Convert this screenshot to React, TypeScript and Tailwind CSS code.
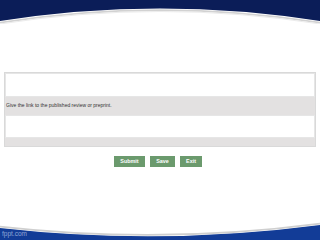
import React from 'react';

export default function App() {
  return (
    <div className="w-[320px] h-[240px] bg-white flex flex-col overflow-hidden font-['Liberation_Sans',Arial,sans-serif]">
      {/* top banner */}
      <svg width="320" height="24" viewBox="0 0 320 24" className="block shrink-0">
        <path d="M0 0 H320 V21 Q160 -4 0 21 Z" fill="#0b1d58" />
        <path d="M0 22.6 Q160 -2.4 320 22.6" fill="none" stroke="#d2d2d2" strokeWidth="1.6" />
        <path d="M0 24 Q160 -1 320 24" fill="none" stroke="#ececec" strokeWidth="1" />
      </svg>

      {/* form */}
      <div className="mt-[48px] mx-[4px] w-[312px] bg-[#e3e1e1] border border-[#d9d9d9] flex flex-col">
        <div className="h-[24px] bg-white border border-[#e6e6e6]" />
        <div className="h-[18px] flex items-center pl-[1px] text-[5px] text-[#333333]">
          Give the link to the published review or preprint.
        </div>
        <div className="h-[23px] bg-white border border-[#e6e6e6]" />
        <div className="h-[8px]" />
      </div>

      {/* buttons */}
      <div className="mt-[9px] flex justify-center gap-[5px] pr-[4px]">
        <button className="w-[31px] h-[11px] bg-[#6b9a6d] text-white font-bold text-[5.4px] leading-none">
          Submit
        </button>
        <button className="w-[25px] h-[11px] bg-[#6b9a6d] text-white font-bold text-[5.4px] leading-none">
          Save
        </button>
        <button className="w-[22px] h-[11px] bg-[#6b9a6d] text-white font-bold text-[5.4px] leading-none">
          Exit
        </button>
      </div>

      {/* bottom banner */}
      <div className="mt-auto relative h-[20px] shrink-0">
        <svg width="320" height="20" viewBox="0 0 320 20" className="absolute inset-0 block">
          <path d="M0 8 Q160 26 320 5 V20 H0 Z" fill="#123c97" />
          <path d="M0 6.6 Q160 24.6 320 3.6" fill="none" stroke="#cfcfcf" strokeWidth="1.6" />
        </svg>
        <div className="relative pt-[11px] pl-[2px] text-[6.5px] leading-none text-[#8ea5d6]">fppt.com</div>
      </div>
    </div>
  );
}
